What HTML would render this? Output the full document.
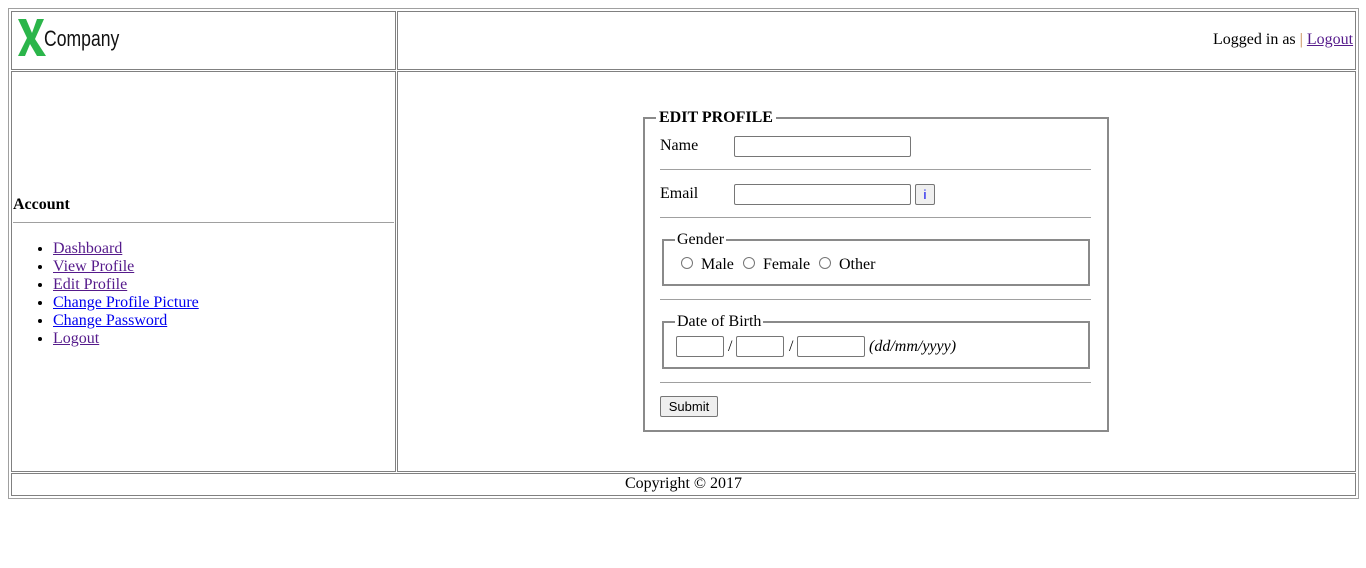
<!DOCTYPE html>
<html><head><style>
body{margin:0;width:1366px;height:568px;background:#fff;font-family:"Liberation Serif",serif;font-size:16px;color:#000;position:relative;overflow:hidden}
.b{position:absolute;border:1px solid #808080;box-sizing:border-box}
.f{position:absolute;border:2px solid #8a8a8a;box-sizing:border-box}
.t{position:absolute;white-space:nowrap;line-height:18px}
a{color:#0000ee;text-decoration:underline}
a.v{color:#551a8b}
.in{position:absolute;border:1px solid #767676;border-radius:2px;box-sizing:border-box;background:#fff}
.rad{position:absolute;width:12px;height:12px;border:1px solid #767676;border-radius:50%;box-sizing:border-box}
hr{position:absolute;margin:0;border:0;border-top:1px solid #a0a0a0;height:0}
.btn{position:absolute;border:1px solid #767676;border-radius:2px;background:#efefef;box-sizing:border-box;font-family:"Liberation Sans",sans-serif;font-size:13px;text-align:center}
</style></head><body>
<div class="b" style="left:8px;top:8px;width:1351px;height:491px;border-color:#a0a0a0"></div>
<div class="b" style="left:11px;top:11px;width:385px;height:59px"></div>
<div class="b" style="left:397px;top:11px;width:959px;height:59px"></div>
<div class="b" style="left:11px;top:71px;width:385px;height:401px"></div>
<div class="b" style="left:397px;top:71px;width:959px;height:401px"></div>
<div class="b" style="left:11px;top:473px;width:1345px;height:23px"></div>
<svg style="position:absolute;left:16px;top:18px" width="32" height="40"><polygon points="2,1 10,1 16,15 21,1 28,1 19,21 30,38 21,38 14,26 9,38 2,38 11,20" fill="#2bb54a"/></svg>
<div class="t" style="left:44px;top:28px;font-family:'Liberation Sans',sans-serif;font-size:22px;line-height:22px;transform:scaleX(0.8);transform-origin:left;color:#111">Company</div>
<div class="t" style="left:1213px;top:31px">Logged in as <span style="color:#c08040">|</span> <a class="v">Logout</a></div>
<div class="t" style="left:13px;top:196px;font-weight:bold">Account</div>
<hr style="left:13px;top:222px;width:381px">
<ul style="position:absolute;left:13px;top:240px;margin:0;padding-left:40px;line-height:18px">
<li><a class="v">Dashboard</a></li><li><a class="v">View Profile</a></li><li><a class="v">Edit Profile</a></li><li><a>Change Profile Picture</a></li><li><a>Change Password</a></li><li><a class="v">Logout</a></li></ul>
<div class="f" style="left:643px;top:117px;width:466px;height:315px"></div>
<div class="t" style="left:656px;top:109px;font-weight:bold;background:#fff;padding:0 3px">EDIT PROFILE</div>
<div class="t" style="left:660px;top:137px">Name</div>
<div class="in" style="left:734px;top:136px;width:177px;height:21px"></div>
<hr style="left:660px;top:169px;width:431px">
<div class="t" style="left:660px;top:185px">Email</div>
<div class="in" style="left:734px;top:184px;width:177px;height:21px"></div>
<div class="btn" style="left:915px;top:184px;width:20px;height:21px;color:#0000ee;line-height:19px">i</div>
<hr style="left:660px;top:217px;width:431px">
<div class="f" style="left:662px;top:239px;width:428px;height:47px"></div>
<div class="t" style="left:675px;top:231px;background:#fff;padding:0 2px">Gender</div>
<div class="rad" style="left:681px;top:257px"></div><div class="t" style="left:701px;top:256px">Male</div>
<div class="rad" style="left:743px;top:257px"></div><div class="t" style="left:763px;top:256px">Female</div>
<div class="rad" style="left:819px;top:257px"></div><div class="t" style="left:839px;top:256px">Other</div>
<hr style="left:660px;top:299px;width:431px">
<div class="f" style="left:662px;top:321px;width:428px;height:48px"></div>
<div class="t" style="left:675px;top:313px;background:#fff;padding:0 2px">Date of Birth</div>
<div class="in" style="left:676px;top:336px;width:48px;height:21px"></div>
<div class="t" style="left:728px;top:338px">/</div>
<div class="in" style="left:736px;top:336px;width:48px;height:21px"></div>
<div class="t" style="left:789px;top:338px">/</div>
<div class="in" style="left:797px;top:336px;width:68px;height:21px"></div>
<div class="t" style="left:869px;top:338px;font-style:italic">(dd/mm/yyyy)</div>
<hr style="left:660px;top:382px;width:431px">
<div class="btn" style="left:660px;top:396px;width:58px;height:21px;line-height:19px">Submit</div>
<div class="t" style="left:625px;top:475px">Copyright © 2017</div>
</body></html>
